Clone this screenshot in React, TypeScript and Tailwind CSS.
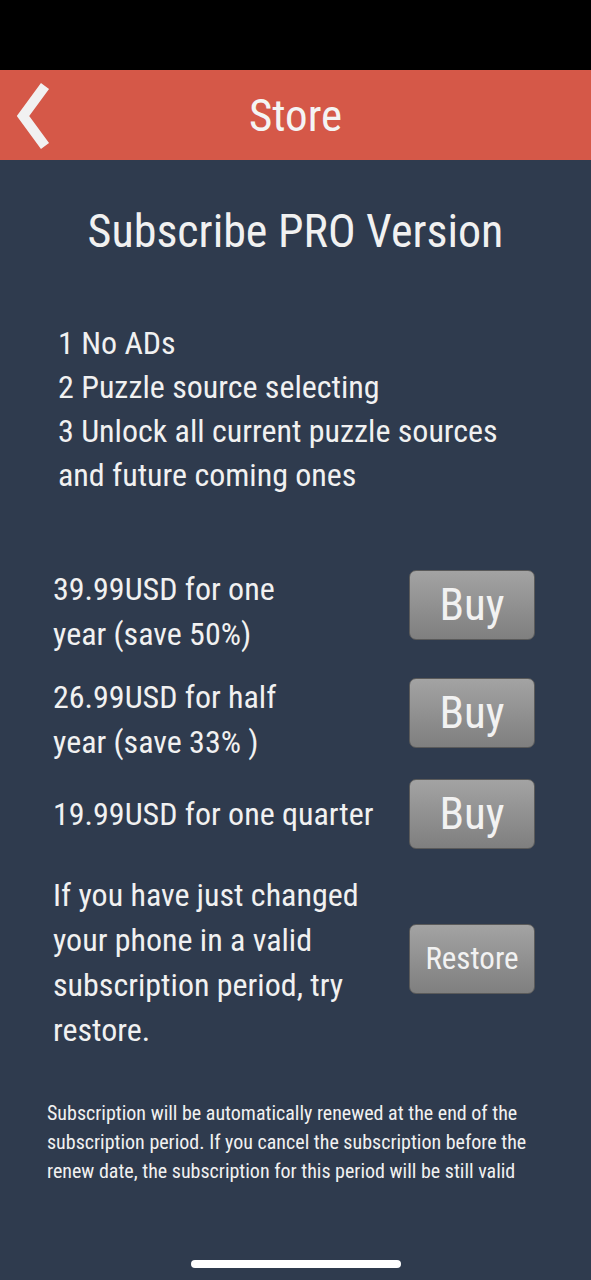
import React from 'react';

const font = { fontFamily: '"Liberation Sans Narrow", "Roboto Condensed", "Liberation Sans", sans-serif' };

const BuyButton: React.FC<{ label: string; small?: boolean }> = ({ label, small }) => (
  <button
    className={`w-[126px] h-[70px] rounded-[7px] border border-[#5a5a5a] bg-gradient-to-b from-[#a3a3a3] to-[#7f7f7f] text-[#f2f2f2] flex items-center justify-center ${
      small ? 'text-[31px]' : 'text-[45px]'
    }`}
  >
    {label}
  </button>
);

const App: React.FC = () => {
  return (
    <div className="w-[591px] h-[1280px] bg-[#2f3b4e] text-[#f1f1f1] flex flex-col overflow-hidden" style={font}>
      {/* status bar */}
      <div className="h-[70px] bg-black" />

      {/* header */}
      <div className="h-[90px] bg-[#d55848] flex items-center relative">
        <svg className="absolute left-[15px] top-[12px]" width="36" height="68" viewBox="0 0 36 68">
          <path d="M30 4 L8 34 L30 64" stroke="#f1f1f1" strokeWidth="10" fill="none" strokeLinejoin="miter" />
        </svg>
        <div className="w-full text-center text-[45px] leading-none text-[#f4f4f4]">Store</div>
      </div>

      {/* title */}
      <div className="mt-[48px] text-center text-[46px] leading-none">Subscribe PRO Version</div>

      {/* features */}
      <div className="mt-[67px] pl-[58px] text-[32px] leading-[44px]">
        <div>1 No ADs</div>
        <div>2 Puzzle source selecting</div>
        <div>3 Unlock all current puzzle sources</div>
        <div>and future coming ones</div>
      </div>

      {/* offers */}
      <div className="mt-[70px] pl-[53px] pr-[56px] flex flex-col">
        <div className="flex items-start justify-between">
          <div className="text-[32px] leading-[45px]">
            <div>39.99USD for one</div>
            <div>year (save 50%)</div>
          </div>
          <div className="mt-[3px]">
            <BuyButton label="Buy" />
          </div>
        </div>

        <div className="mt-[18px] flex items-start justify-between">
          <div className="text-[32px] leading-[45px]">
            <div>26.99USD for half</div>
            <div>year (save 33% )</div>
          </div>
          <div className="mt-[3px]">
            <BuyButton label="Buy" />
          </div>
        </div>

        <div className="mt-[14px] flex items-center justify-between">
          <div className="text-[32px] leading-[45px]">19.99USD for one quarter</div>
          <BuyButton label="Buy" />
        </div>

        <div className="mt-[24px] flex items-center justify-between">
          <div className="text-[32px] leading-[45px]">
            <div>If you have just changed</div>
            <div>your phone in a valid</div>
            <div>subscription period, try</div>
            <div>restore.</div>
          </div>
          <div className="mb-[8px]">
            <BuyButton label="Restore" small />
          </div>
        </div>
      </div>

      {/* notice */}
      <div className="mt-[46px] pl-[47px] pr-[40px] text-[20px] leading-[29px]">
        Subscription will be automatically renewed at the end of the subscription period. If you cancel the subscription before the renew date, the subscription for this period will be still valid
      </div>

      <div className="mt-auto mb-[12px] mx-auto w-[210px] h-[8px] rounded-full bg-white" />
    </div>
  );
};

export default App;
